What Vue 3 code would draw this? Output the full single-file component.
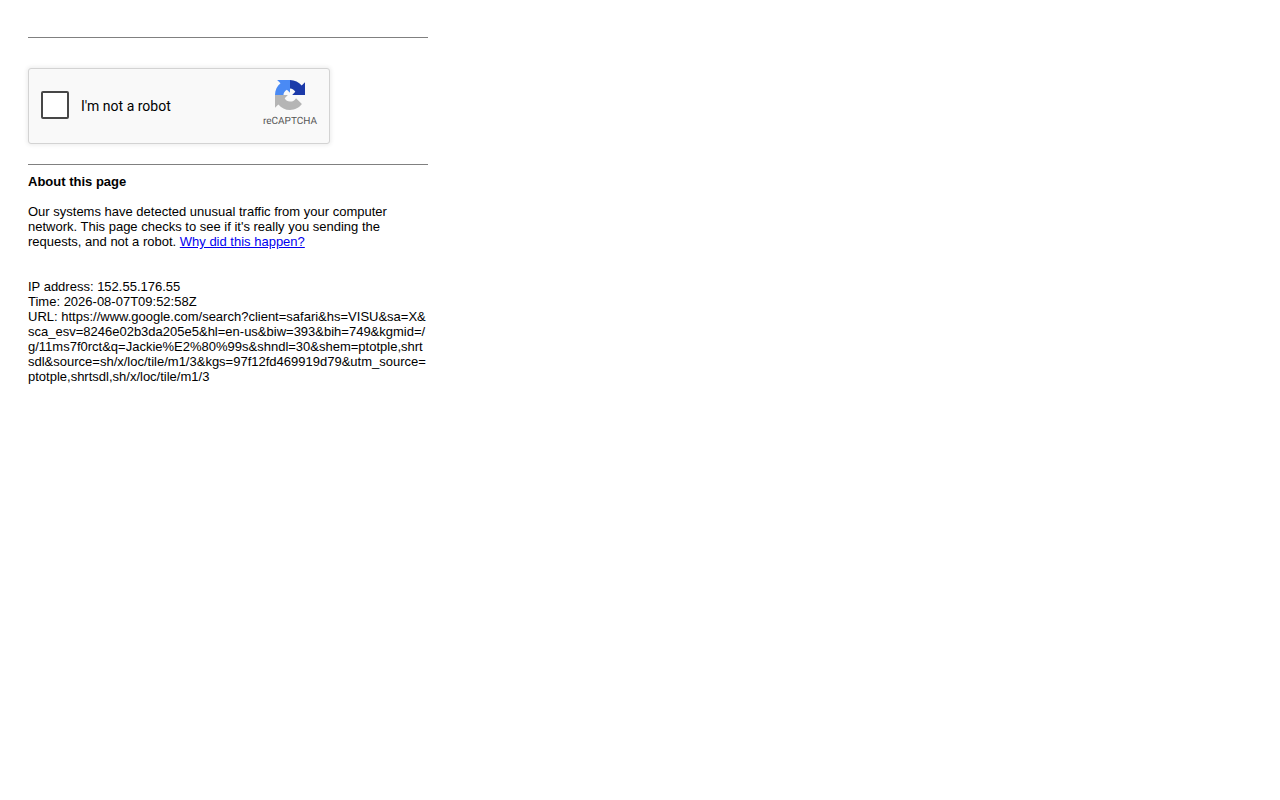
<script setup>
import { ref } from 'vue'

const checked = ref(false)
const ip = '152.55.176.55'
const time = '2026-08-07T09:52:58Z'
const url =
  'https://www.google.com/search?client=safari&hs=VISU&sa=X&sca_esv=8246e02b3da205e5&hl=en-us&biw=393&bih=749&kgmid=/g/11ms7f0rct&q=Jackie%E2%80%99s&shndl=30&shem=ptotple,shrtsdl&source=sh/x/loc/tile/m1/3&kgs=97f12fd469919d79&utm_source=ptotple,shrtsdl,sh/x/loc/tile/m1/3'
</script>

<template>
  <main class="page">
    <hr class="rule" />
    <form class="captcha" @submit.prevent>
      <label class="check">
        <input v-model="checked" class="box" type="checkbox" />
        <span class="check-text">I'm not a robot</span>
      </label>
      <div class="brand">
        <svg class="logo" viewBox="0 0 64 64" aria-hidden="true">
          <path
            fill="#1c3aa9"
            d="M64 32V4.7l-7.16 7.16C50.9 4.7 42 .1 32 .1V18a14 14 0 0 1 11.3 7.3L36.6 32z"
          />
          <path
            fill="#4a8af4"
            d="M32 0H4.6l7.16 7.16C4.6 13 0 22 0 32h18a14 14 0 0 1 7.3-11.3l6.7 6.7z"
          />
          <path
            fill="#b5b5b5"
            d="M0 32v27.3l7.16-7.16C13 59.3 22 63.9 32 63.9c10.4 0 19.6-5 25.4-12.6L44.8 38.7A14 14 0 0 1 32 46a14 14 0 0 1-11.3-7.3l6.7-6.7z"
          />
        </svg>
        <span class="brand-name">reCAPTCHA</span>
      </div>
    </form>
    <hr class="rule" />
    <section class="about">
      <h1 class="title">About this page</h1>
      <p class="text">
        Our systems have detected unusual traffic from your computer network. This page checks to see
        if it's really you sending the requests, and not a robot.
        <a href="#why">Why did this happen?</a>
      </p>
      <div class="details">
        <div>IP address: {{ ip }}</div>
        <div>Time: {{ time }}</div>
        <div>URL: {{ url }}</div>
      </div>
    </section>
  </main>
</template>

<style>
body {
  background: #fff;
}
</style>

<style scoped>
.page {
  box-sizing: border-box;
  max-width: 440px;
  padding: 37px 12px 20px 28px;
  color: #000;
  font: 13px/15px "Liberation Sans", Arial, sans-serif;
}
.rule {
  height: 1px;
  margin: 0;
  border: 0;
  background: #808080;
}
.captcha {
  display: flex;
  justify-content: space-between;
  align-items: flex-start;
  box-sizing: border-box;
  max-width: 302px;
  margin: 30px 0 20px;
  padding: 0 12px 2px;
  border: 1px solid #d3d3d3;
  border-radius: 3px;
  background: #f9f9f9;
  box-shadow: 0 0 4px 1px rgba(0, 0, 0, 0.08);
}
.check {
  display: flex;
  align-items: center;
  gap: 12px;
  height: 72px;
  font: 14px/17px Roboto, sans-serif;
}
.check-text {
  padding-top: 3px;
}
.box {
  appearance: none;
  box-sizing: border-box;
  width: 28px;
  height: 28px;
  margin: 0;
  border: 2px solid #474747;
  border-radius: 2px;
  background: #fff;
}
.brand {
  display: flex;
  flex-direction: column;
  align-items: center;
  gap: 6px;
  padding-top: 11px;
}
.logo {
  width: 30px;
  height: 30px;
}
.brand-name {
  color: #555;
  font: 10px/12px Roboto, sans-serif;
  text-rendering: geometricPrecision;
}
.about {
  margin-top: 9px;
}
.title {
  margin: 0 0 15px;
  font-size: 13px;
}
.text {
  margin: 0 0 30px;
}
.text a {
  color: #0000ee;
}
.details {
  word-break: break-all;
}
</style>
